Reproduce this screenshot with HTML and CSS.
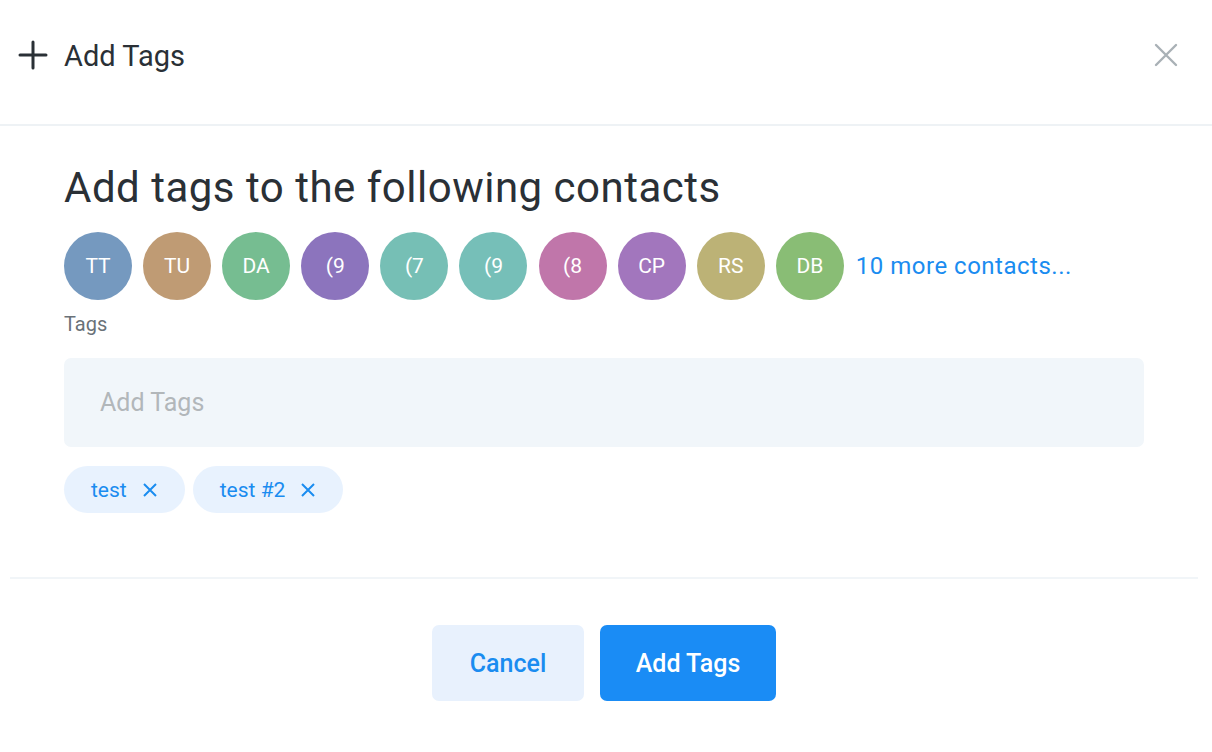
FILE: index.html
```html
<!DOCTYPE html>
<html>
<head>
<meta charset="utf-8">
<link rel="stylesheet" href="styles.css">
</head>
<body>
<div class="modal">
  <header class="modal-header">
    <div class="title">
      <svg class="plus" width="30" height="30" viewBox="0 0 30 30"><path d="M15 2v26M2 15h26" stroke="#2a3036" stroke-width="3" stroke-linecap="round"/></svg>
      <span>Add Tags</span>
    </div>
    <svg class="close" width="24" height="24" viewBox="0 0 24 24"><path d="M2 2l20 20M22 2L2 22" stroke="#a9b1b6" stroke-width="2.4" stroke-linecap="round"/></svg>
  </header>
  <section class="modal-body">
    <h1 class="heading">Add tags to the following contacts</h1>
    <div class="avatars">
      <div class="avatar c1">TT</div>
      <div class="avatar c2">TU</div>
      <div class="avatar c3">DA</div>
      <div class="avatar c4">(9</div>
      <div class="avatar c5">(7</div>
      <div class="avatar c6">(9</div>
      <div class="avatar c7">(8</div>
      <div class="avatar c8">CP</div>
      <div class="avatar c9">RS</div>
      <div class="avatar c10">DB</div>
      <a class="more">10 more contacts...</a>
    </div>
    <div class="label">Tags</div>
    <div class="input">Add Tags</div>
    <div class="chips">
      <span class="chip">test <svg width="16" height="16" viewBox="0 0 16 16"><path d="M2 2l12 12M14 2L2 14" stroke="#1a8cf0" stroke-width="2"/></svg></span>
      <span class="chip">test #2 <svg width="16" height="16" viewBox="0 0 16 16"><path d="M2 2l12 12M14 2L2 14" stroke="#1a8cf0" stroke-width="2"/></svg></span>
    </div>
  </section>
  <footer class="modal-footer">
    <button class="btn cancel">Cancel</button>
    <button class="btn primary">Add Tags</button>
  </footer>
</div>
</body>
</html>
```

FILE: styles.css
```css
* { box-sizing: border-box; }
html, body { margin: 0; padding: 0; background: #fff; }
body { font-family: Roboto, "Noto Sans", sans-serif; color: #2a3036; width: 1212px; height: 752px; overflow: hidden; }
.modal { width: 1212px; }
.modal-header {
  height: 126px;
  border-bottom: 2px solid #eef2f5;
  display: flex;
  align-items: center;
  justify-content: space-between;
  padding: 0 34px 14px 18px;
}
.title { display: flex; align-items: center; gap: 16px; font-size: 29px; color: #2a3036; }
.title span { position: relative; top: 1px; }
.title .plus { display: block; }
.close { display: block; }
.modal-body { padding: 37px 68px 0 64px; }
.heading { margin: 0; font-weight: 400; font-size: 42px; line-height: 50px; color: #2a3036; letter-spacing: 0.5px; }
.avatars { display: flex; align-items: center; margin-top: 19px; }
.avatar {
  width: 68px; height: 68px; border-radius: 50%;
  display: flex; align-items: center; justify-content: center;
  color: #fff; font-size: 21px; margin-right: 11.1px; flex: none;
}
.c1 { background: #7599bf; }
.c2 { background: #bf9b74; }
.c3 { background: #76bd91; }
.c4 { background: #8c74bd; }
.c5 { background: #76bfb5; }
.c6 { background: #76bfb8; }
.c7 { background: #c076aa; }
.c8 { background: #a276bd; }
.c9 { background: #bcb276; }
.c10 { background: #89bd75; margin-right: 12px; }
.more { color: #1a8cf0; font-size: 24px; letter-spacing: 0.5px; }
.label { margin-top: 13px; font-size: 20px; line-height: 23px; color: #6a7278; }
.input {
  margin-top: 22px; height: 89px; background: #f1f6fa; border-radius: 7px;
  display: flex; align-items: center; padding-left: 36px;
  font-size: 25px; color: #b2b7ba;
}
.chips { display: flex; gap: 8px; margin-top: 19px; }
.chip {
  height: 47px; border-radius: 24px; background: #e8f2fe; color: #1a8cf0;
  font-size: 21px; display: flex; align-items: center; gap: 15px; padding: 0 27px 0 27px;
}
.chip svg { display: block; }
.modal-footer {
  margin: 64px 14px 0 10px;
  border-top: 2px solid #f1f5f8;
  display: flex; justify-content: center; gap: 16px;
  padding-top: 46px;
}
.btn {
  height: 76px; border: none; border-radius: 7px; font-family: Roboto, sans-serif;
  font-size: 25px; font-weight: 500; cursor: pointer;
}
.cancel { width: 152px; background: #e8f1fd; color: #1a8cf0; }
.primary { width: 176px; background: #1a8cf5; color: #fff; }
```
